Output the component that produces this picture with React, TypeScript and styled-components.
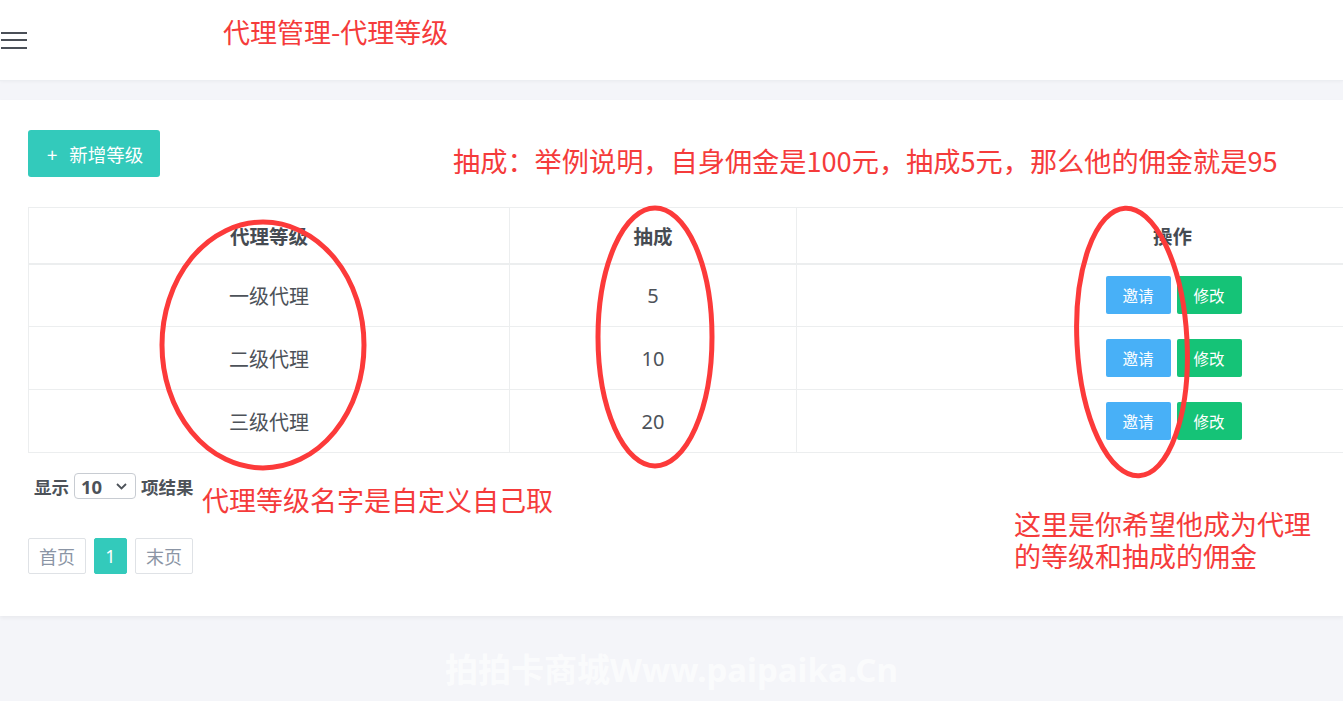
import React from 'react';
import styled, { createGlobalStyle } from 'styled-components';

const GlobalStyle = createGlobalStyle`
  html, body {
    margin: 0;
    padding: 0;
    background: #f4f5f9;
    font-family: "Noto Sans", "Noto Sans CJK SC", sans-serif;
    color: #4d5259;
  }
  * { box-sizing: border-box; }
`;

const Page = styled.div`
  position: relative;
  width: 1343px;
  height: 701px;
  overflow: hidden;
  background: #f4f5f9;
`;

const TopBar = styled.header`
  display: flex;
  align-items: center;
  height: 81px;
  background: #fff;
  border-bottom: 1px solid #eceef2;
  box-shadow: 0 1px 3px rgba(0, 0, 0, 0.03);
`;

const Burger = styled.button`
  display: flex;
  flex-direction: column;
  justify-content: space-between;
  width: 26px;
  height: 17px;
  margin: 0 0 0 1px;
  padding: 0;
  border: none;
  background: transparent;

  span {
    display: block;
    height: 2px;
    background: #4a4f57;
  }
`;

const PageTitle = styled.h1`
  margin: -18px 0 0 196px;
  font-size: 27px;
  font-weight: 400;
  color: #f53b3b;
  font-family: "Noto Sans CJK SC", sans-serif;
`;

const Card = styled.section`
  position: relative;
  margin-top: 19px;
  padding: 30px 0 42px 28px;
  background: #fff;
  box-shadow: 0 2px 4px rgba(0, 0, 0, 0.05);
  overflow: hidden;
`;

const Toolbar = styled.div`
  display: flex;
  align-items: flex-start;
  height: 47px;
`;

const AddButton = styled.button`
  display: flex;
  align-items: center;
  gap: 12px;
  width: 132px;
  height: 47px;
  padding: 0 0 0 19px;
  border: none;
  border-radius: 3px;
  background: #33cabb;
  color: #fff;
  font-size: 18.5px;
  font-family: "Noto Sans CJK SC", sans-serif;
`;

const Note = styled.div`
  color: #f53b3b;
  font-size: 27px;
  line-height: 32px;
  font-family: "Noto Sans CJK SC", sans-serif;
  white-space: nowrap;
`;

const ToolbarNote = styled(Note)`
  margin: 14px 0 0 293px;
  font-size: 27.2px;
`;

const Table = styled.table`
  width: 1520px;
  margin-top: 30px;
  border-collapse: collapse;
  table-layout: fixed;
  font-size: 20px;
  font-family: "Noto Sans", "Noto Sans CJK SC", sans-serif;

  th, td {
    border: 1px solid #eceeef;
    text-align: center;
    vertical-align: middle;
    color: #4d5259;
  }

  th {
    height: 56px;
    font-weight: 700;
    font-size: 19.5px;
    color: #464b52;
    border-bottom-width: 2px;
  }

  td {
    height: 63px;
  }
`;

const ActionCell = styled.div`
  display: flex;
  justify-content: center;
  gap: 6px;
  padding-left: 2px;
`;

const ActionButton = styled.button<{ $color: string }>`
  width: 65px;
  height: 38px;
  border: none;
  border-radius: 2px;
  background: ${({ $color }) => $color};
  color: #fff;
  font-size: 15.5px;
  font-family: "Noto Sans CJK SC", sans-serif;
`;

const LengthRow = styled.div`
  display: flex;
  align-items: center;
  gap: 5px;
  margin: 20px 0 0 6px;
  height: 26px;
  font-size: 17.5px;
  font-weight: 700;
  color: #4d5259;
  font-family: "Noto Sans", "Noto Sans CJK SC", sans-serif;
`;

const FakeSelect = styled.div`
  display: flex;
  align-items: center;
  justify-content: space-between;
  width: 62px;
  height: 26px;
  padding: 0 8px 0 6px;
  border: 1px solid #c8ccd2;
  border-radius: 4px;
  font-weight: 700;
  font-size: 18.5px;
`;

const Pager = styled.div`
  display: flex;
  gap: 8px;
  margin-top: 39px;
`;

const PageButton = styled.span<{ $active?: boolean }>`
  display: flex;
  align-items: center;
  justify-content: center;
  height: 36px;
  padding: 0 10px;
  min-width: 33px;
  border: 1px solid ${({ $active }) => ($active ? '#33cabb' : '#dfe2e6')};
  border-radius: 2px;
  background: ${({ $active }) => ($active ? '#33cabb' : '#fff')};
  color: ${({ $active }) => ($active ? '#fff' : '#8b95a5')};
  font-size: 18px;
  font-family: "Noto Sans", "Noto Sans CJK SC", sans-serif;
`;

const FloatNote = styled.div<{ $top: number; $left: number }>`
  position: absolute;
  top: ${({ $top }) => $top}px;
  left: ${({ $left }) => $left}px;
  display: flex;
  flex-direction: column;
`;

const Marks = styled.svg`
  position: absolute;
  top: 0;
  left: 0;
  pointer-events: none;
`;

const Watermark = styled.div`
  display: flex;
  justify-content: center;
  margin-top: 28px;
  font-size: 33px;
  font-weight: 700;
  color: rgba(255, 255, 255, 0.65);
  font-family: "Noto Sans", "Noto Sans CJK SC", sans-serif;
`;

const rows = [
  { name: '一级代理', cut: 5 },
  { name: '二级代理', cut: 10 },
  { name: '三级代理', cut: 20 },
];

export default function App() {
  return (
    <Page>
      <GlobalStyle />
      <TopBar>
        <Burger aria-label="menu">
          <span />
          <span />
          <span />
        </Burger>
        <PageTitle>代理管理-代理等级</PageTitle>
      </TopBar>

      <Card>
        <Toolbar>
          <AddButton>
            <span>+</span>
            <span>新增等级</span>
          </AddButton>
          <ToolbarNote>抽成：举例说明，自身佣金是100元，抽成5元，那么他的佣金就是95</ToolbarNote>
        </Toolbar>

        <Table>
          <colgroup>
            <col style={{ width: 481 }} />
            <col style={{ width: 287 }} />
            <col style={{ width: 752 }} />
          </colgroup>
          <thead>
            <tr>
              <th>代理等级</th>
              <th>抽成</th>
              <th>操作</th>
            </tr>
          </thead>
          <tbody>
            {rows.map((r) => (
              <tr key={r.name}>
                <td>{r.name}</td>
                <td>{r.cut}</td>
                <td>
                  <ActionCell>
                    <ActionButton $color="#48b0f7">邀请</ActionButton>
                    <ActionButton $color="#15c377">修改</ActionButton>
                  </ActionCell>
                </td>
              </tr>
            ))}
          </tbody>
        </Table>

        <LengthRow>
          <span>显示</span>
          <FakeSelect>
            <span>10</span>
            <svg width="11" height="7" viewBox="0 0 11 7">
              <path d="M1 1l4.5 4.5L10 1" fill="none" stroke="#4d5259" strokeWidth="1.8" />
            </svg>
          </FakeSelect>
          <span>项结果</span>
        </LengthRow>

        <Pager>
          <PageButton>首页</PageButton>
          <PageButton $active>1</PageButton>
          <PageButton>末页</PageButton>
        </Pager>
      </Card>

      <Watermark>拍拍卡商城Www.paipaika.Cn</Watermark>

      <FloatNote $top={484} $left={202}>
        <Note>代理等级名字是自定义自己取</Note>
      </FloatNote>
      <FloatNote $top={508} $left={1014}>
        <Note>这里是你希望他成为代理</Note>
        <Note>的等级和抽成的佣金</Note>
      </FloatNote>

      <Marks width="1343" height="701" viewBox="0 0 1343 701">
        <g fill="none" stroke="#fc3a3a" strokeWidth="5">
          <ellipse cx="263" cy="345" rx="101" ry="123" />
          <ellipse cx="655" cy="337" rx="57" ry="129" />
          <ellipse cx="1132" cy="342" rx="55" ry="134" transform="rotate(-3 1132 342)" />
        </g>
      </Marks>
    </Page>
  );
}
